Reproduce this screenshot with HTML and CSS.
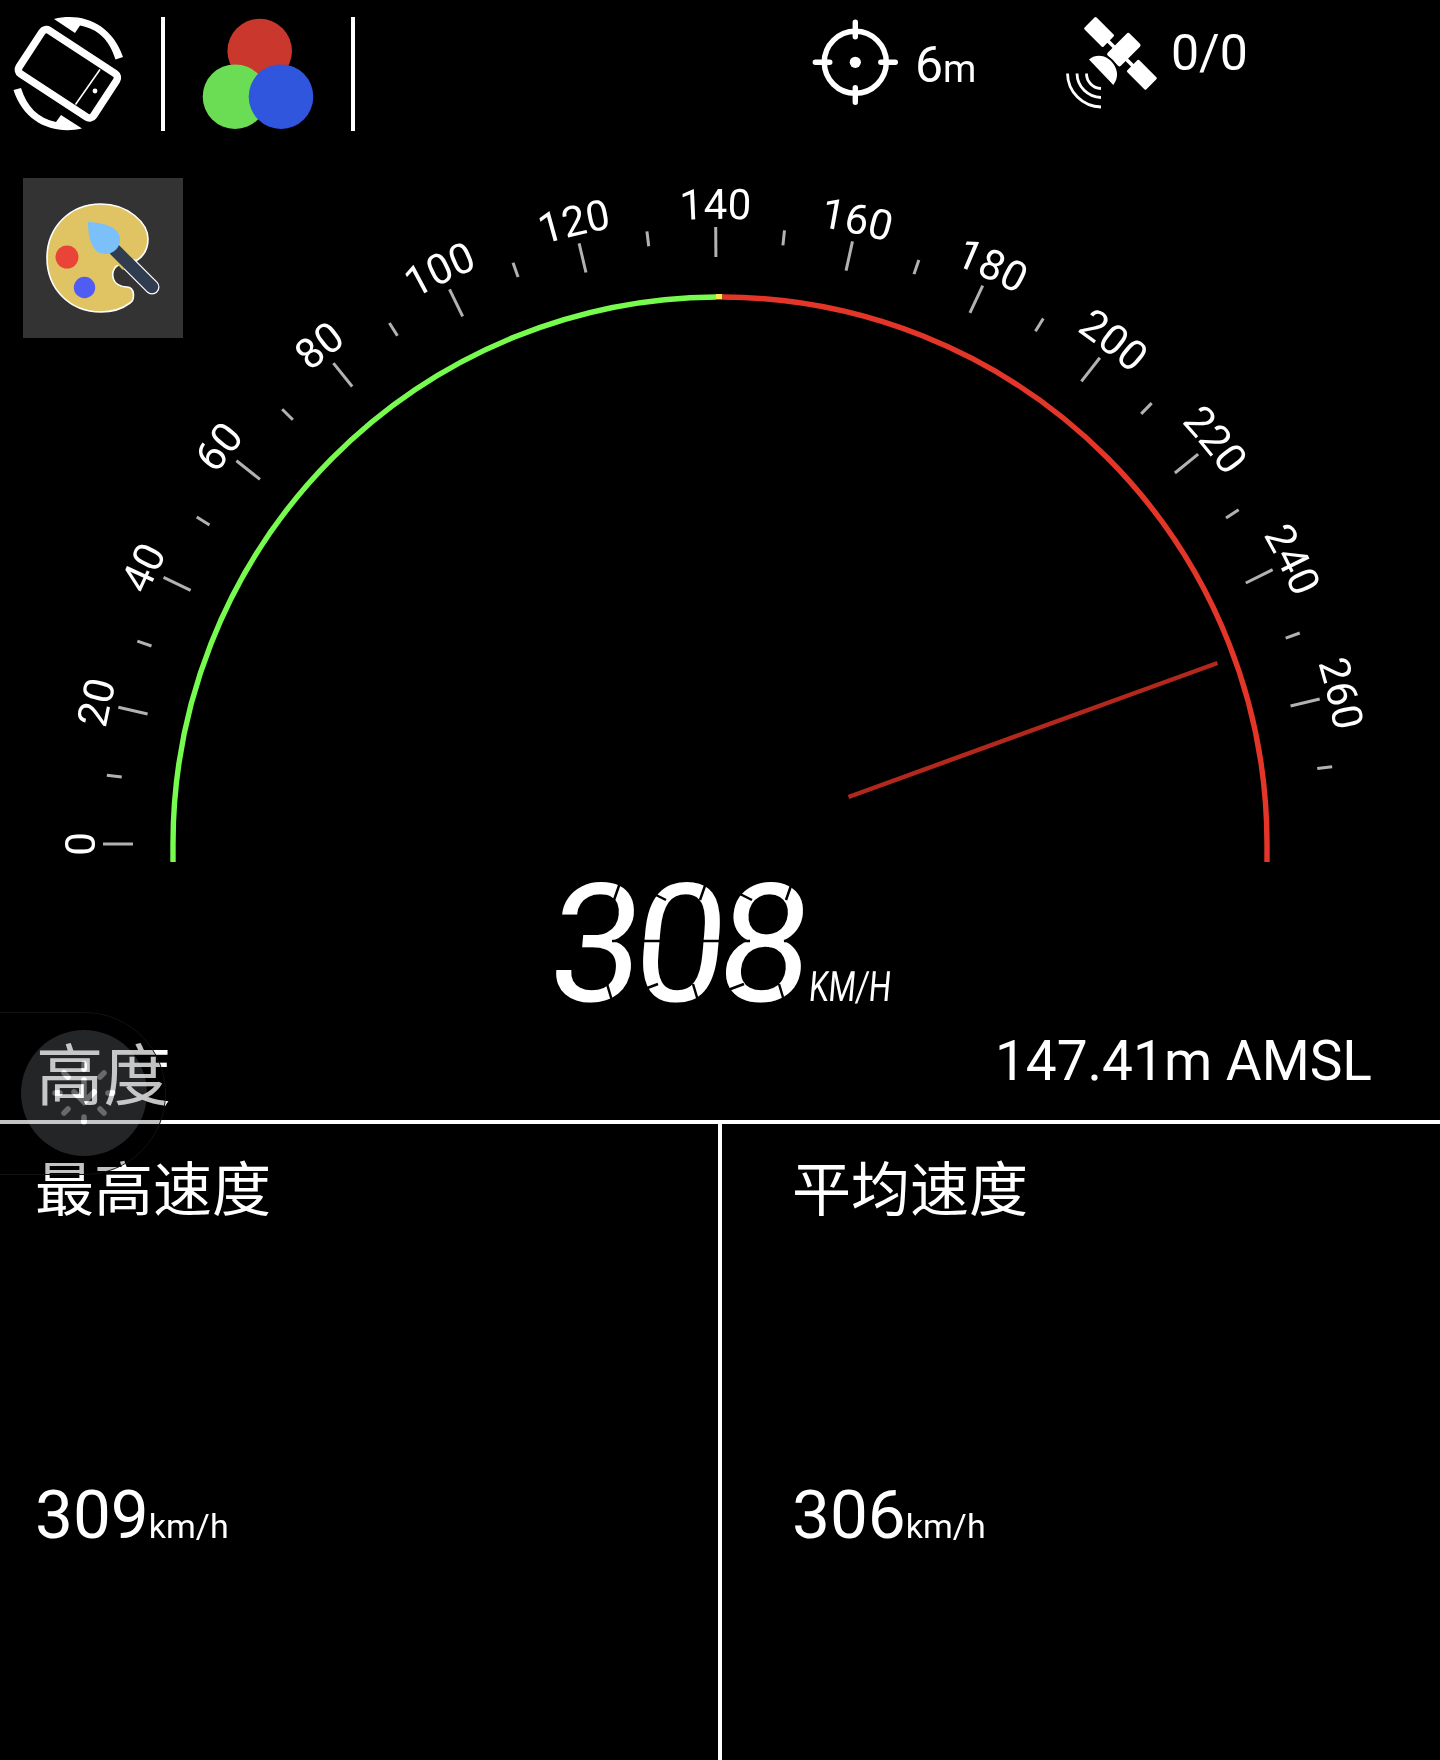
FILE: index.html
```html
<!DOCTYPE html>
<html lang="zh-CN">

<head>
    <meta charset="UTF-8">
    <meta name="viewport" content="width=device-width, initial-scale=1.0">
    <title>Speedometer</title>
    <link rel="stylesheet" href="styles.css">
</head>

<body>
    <header class="toolbar">
        <div class="tool">
            <svg class="icon-rotate" width="120" height="120" viewBox="0 0 120 120">
                <rect x="-44.500" y="-26" width="89" height="52" rx="5" transform="translate(67.900 73.700) rotate(33.2)" fill="none" stroke="#fff" stroke-width="7.500" />
                <path d="M100 69.500L75.500 104.500" stroke="#fff" stroke-width="1.600" />
                <circle cx="95" cy="91" r="2.400" fill="#fff" />
                <path d="M54 19C82 12 112 24 123 57L115.500 59.500C109 39 98 29 80 25.500L75 33Z" fill="#fff" />
                <path d="M82 128.500C54 135 24 123 13.500 90L21 88C27 107 38 118 56 122L61 115Z" fill="#fff" />
            </svg>
        </div>
        <div class="tool">
            <svg width="114" height="114" viewBox="0 0 114 114">
                <circle cx="58.700" cy="34" r="32.300" fill="#ca372d" />
                <circle cx="34" cy="79.700" r="32.300" fill="#6bdd54" />
                <circle cx="80" cy="79.700" r="32.300" fill="#3056de" />
            </svg>
        </div>
        <div class="status accuracy">
            <svg width="86" height="86" viewBox="-43.300 -43.300 86 86">
                <circle r="31" fill="none" stroke="#fff" stroke-width="5.500" />
                <circle r="5.600" fill="#fff" />
                <path d="M0 -40V-25.500M0 25.500V40M-40 0H-25.500M25.500 0H40" stroke="#fff" stroke-width="5.400" stroke-linecap="round" />
            </svg>
            <p>6<small>m</small></p>
        </div>
        <div class="status satellites">
            <svg width="92" height="92" viewBox="0 0 92 92" fill="#fff">
                <g transform="translate(54.300 36.200) rotate(45)">
                    <rect x="-43.500" y="-8.500" width="27" height="17" rx="1.500" />
                    <rect x="17" y="-8.500" width="27" height="17" rx="1.500" />
                    <rect x="-18" y="-1.800" width="36" height="3.600" />
                    <rect x="-9.300" y="-20.500" width="18.600" height="31" rx="2" />
                </g>
                <path class="dish" d="M23 42.500C32 35.500 42 39.500 47.500 47C52 53.500 52.500 61 47.300 68Z" />
                <path d="M20.500 56.500A15 15 0 0 0 35 71.500M11 56.500A24.500 24.500 0 0 0 35 80.500M1.500 56.500A34 34 0 0 0 35 90" fill="none" stroke="#fff" stroke-width="2.800" />
            </svg>
            <p>0/0</p>
        </div>
    </header>

    <main class="gauge">
        <button class="palette" aria-label="Theme">
            <svg width="160" height="160" viewBox="0 0 160 160">
                <path d="M78 26C105 26 125 45 125 61C125 73 118 80 113 83L98 86C91 88 89 94 90 99C91 106 98 109 104 109C112 109 112 122 107 125C99 131 90 134 78 134C46 134 24 110 24 80C24 50 46 26 78 26Z" fill="#e0c463" stroke="#fff" stroke-width="1.600" />
                <path d="M98 78L129 109" stroke="#fff" stroke-width="15" stroke-linecap="round" />
                <path d="M84 64L106 86" stroke="#e0c463" stroke-width="17" />
                <path d="M92 72L129 109" stroke="#303d50" stroke-width="12.500" stroke-linecap="round" />
                <path d="M65 44C84 45 97 50 97 62C97 70 90 76 82 76C69 76 65 60 65 44Z" fill="#7bc0f8" />
                <circle cx="44" cy="79" r="11.500" fill="#e94437" />
                <circle cx="61.500" cy="109.500" r="10.700" fill="#505df4" />
            </svg>
        </button>
        <svg class="dial" width="1440" height="870" viewBox="0 150 1440 870">
            <defs>
                <path id="scale" d="M96.400 885.600A625 625 0 1 1 1343.600 885.600" />
            </defs>
            <path class="arc low" d="M173 862V844A547 547 0 0 1 716 297" />
            <path class="arc mid" d="M716 296.700H722.500" />
            <path class="arc high" d="M722.300 297A547 547 0 0 1 1267 844V862" />
            <g id="ticks"></g>
            <path class="needle" d="M848.500 797L1217.500 663" />
            <text class="speed" transform="translate(546 1000.500) skewX(-5)" textLength="261">308</text>
            <!-- Gaps between the display segments -->
            <path class="gaps" d="M621 880L614 900M707 880L700 900M793 880L786 900
                M607 984L613 1004M693 984L699 1004M779 984L785 1004
                M644 889L666 900M730 889L752 900M634 993L658 984M720 993L744 984
                M612 941H640M640 941H668M698 941H726M726 941H750M784 941H808" />
            <text class="unit" transform="translate(808 1001) skewX(-5)" textLength="82" lengthAdjust="spacingAndGlyphs">KM/H</text>
        </svg>
    </main>

    <section class="altitude">
        <h2>高度</h2>
        <p>147.41m AMSL</p>
    </section>

    <section class="stats">
        <div class="stat">
            <h2>最高速度</h2>
            <p>309<small>km/h</small></p>
        </div>
        <div class="stat">
            <h2>平均速度</h2>
            <p>306<small>km/h</small></p>
        </div>
    </section>

    <div class="assist">
        <svg width="126" height="126" viewBox="-63 -63 126 126">
            <circle class="assist-disc" r="63" />
            <path class="assist-rays" d="M0 -29V-24M0 24V29M-29 0H-24M24 0H29M-20 -20L-16 -16M16 16L20 20M-20 20L-16 16M16 -16L20 -20M0 -13V9M-10 -1L0 9L10 -1" />
        </svg>
    </div>

    <script src="gauge.js"></script>
</body>

</html>
```
FILE: styles.css
```css
* {
    box-sizing: border-box;
}

body {
    position: relative;
    display: flex;
    flex-direction: column;
    height: 1760px;
    margin: 0;
    overflow: hidden;
    background-color: #000;
    color: #fff;
    font-family: Roboto, "Noto Sans CJK SC", sans-serif;
}

h2,
p {
    margin: 0;
    font-weight: 400;
}

svg {
    display: block;
    overflow: visible;
}

.toolbar {
    display: flex;
    height: 150px;
    padding-top: 17px;
}

.tool {
    height: 114px;
    border-right: 4px solid #fff;
}

.tool:first-child {
    width: 165px;
}

.tool:nth-child(2) {
    width: 190px;
    padding-left: 36px;
}

.icon-rotate {
    margin-top: -17px;
}

.status {
    display: flex;
    font-size: 50px;
    line-height: 60px;
}

.accuracy {
    margin-left: 457px;
    width: 254px;
}

.accuracy svg {
    margin-top: 2px;
}

.accuracy p {
    margin: 18px 0 0 17px;
}

.accuracy small {
    font-size: 38px;
}

.satellites p {
    margin: 6px 0 0 13px;
}

/* The dark outline keeps the dish apart from the satellite body */
.dish {
    stroke: #000;
    stroke-width: 4;
    paint-order: stroke;
}

.gauge {
    position: relative;
    height: 870px;
}

/* Floats over the empty corner of the dial */
.palette {
    position: absolute;
    top: 28px;
    left: 23px;
    padding: 0;
    border: 0;
    background-color: #333;
}

.arc {
    fill: none;
    stroke-width: 5.4;
}

.low {
    stroke: #77fb4e;
}

.mid {
    stroke: #fbe64f;
}

.high {
    stroke: #e33629;
}

.needle {
    stroke: #b2281c;
    stroke-width: 4.5;
}

.tick {
    stroke: #b2b2b2;
    stroke-width: 3;
}

.label {
    fill: #fff;
    font-size: 42px;
    text-anchor: middle;
}

.speed {
    fill: #fff;
    font-size: 165px;
}

.gaps {
    fill: none;
    stroke: #000;
    stroke-width: 2.5;
}

.unit {
    fill: #fff;
    font-size: 42px;
    font-weight: 400;
}

.altitude {
    display: flex;
    justify-content: space-between;
    height: 104px;
    padding: 0 68px 0 36px;
    border-bottom: 4px solid #fff;
}

.altitude h2 {
    margin-top: 7px;
    font-size: 67.5px;
    line-height: 100px;
}

.altitude p {
    margin-top: 1px;
    font-size: 55px;
    line-height: 80px;
    white-space: nowrap;
}

.stats {
    display: grid;
    grid-template-columns: 722px 1fr;
    flex: 1;
}

.stat {
    padding: 27px 35px;
}

.stat:first-child {
    border-right: 4px solid #fff;
}

.stat+.stat {
    padding-left: 70px;
}

.stat h2 {
    font-size: 59px;
    line-height: 80px;
}

.stat p {
    margin-top: 244px;
    font-size: 67.5px;
    line-height: 80px;
}

.stat small {
    font-size: 34px;
}

/* Translucent floating button docked to the left edge */
.assist {
    position: absolute;
    top: 1012px;
    left: -2px;
    width: 168px;
    height: 163px;
    padding: 17px 0 0 22px;
    border: 1px solid #121212;
    border-radius: 0 82px 82px 0;
    background-color: rgba(0, 0, 0, 0.24);
}

.assist-disc {
    fill: rgba(225, 232, 238, 0.16);
}

.assist-rays {
    fill: none;
    stroke: #444;
    stroke-width: 5.5;
    stroke-linecap: round;
    mix-blend-mode: plus-lighter;
}
```
FILE: gauge.js
```js
var SVG = 'http://www.w3.org/2000/svg';
var ticks = document.getElementById('ticks');
var step = 6.4; // degrees per 10 km/h
var radius = 625;
// The label path starts a little below the 0 mark
var lead = Math.asin(41.6 / radius) * 180 / Math.PI;

for (var speed = 0; speed <= 270; speed += 10) {
    var major = speed % 20 === 0;
    var angle = speed / 10 * step;

    var line = document.createElementNS(SVG, 'line');
    line.setAttribute('class', 'tick');
    line.setAttribute('x1', 103);
    line.setAttribute('x2', major ? 133 : 118);
    line.setAttribute('y1', 844);
    line.setAttribute('y2', 844);
    line.setAttribute('transform', 'rotate(' + angle + ' 720 844)');
    ticks.appendChild(line);

    if (major) {
        var text = document.createElementNS(SVG, 'text');
        var path = document.createElementNS(SVG, 'textPath');
        text.setAttribute('class', 'label');
        path.setAttribute('href', '#scale');
        path.setAttribute('startOffset', (lead + angle) * Math.PI / 180 * radius);
        path.textContent = speed;
        text.appendChild(path);
        ticks.appendChild(text);
    }
}
```
